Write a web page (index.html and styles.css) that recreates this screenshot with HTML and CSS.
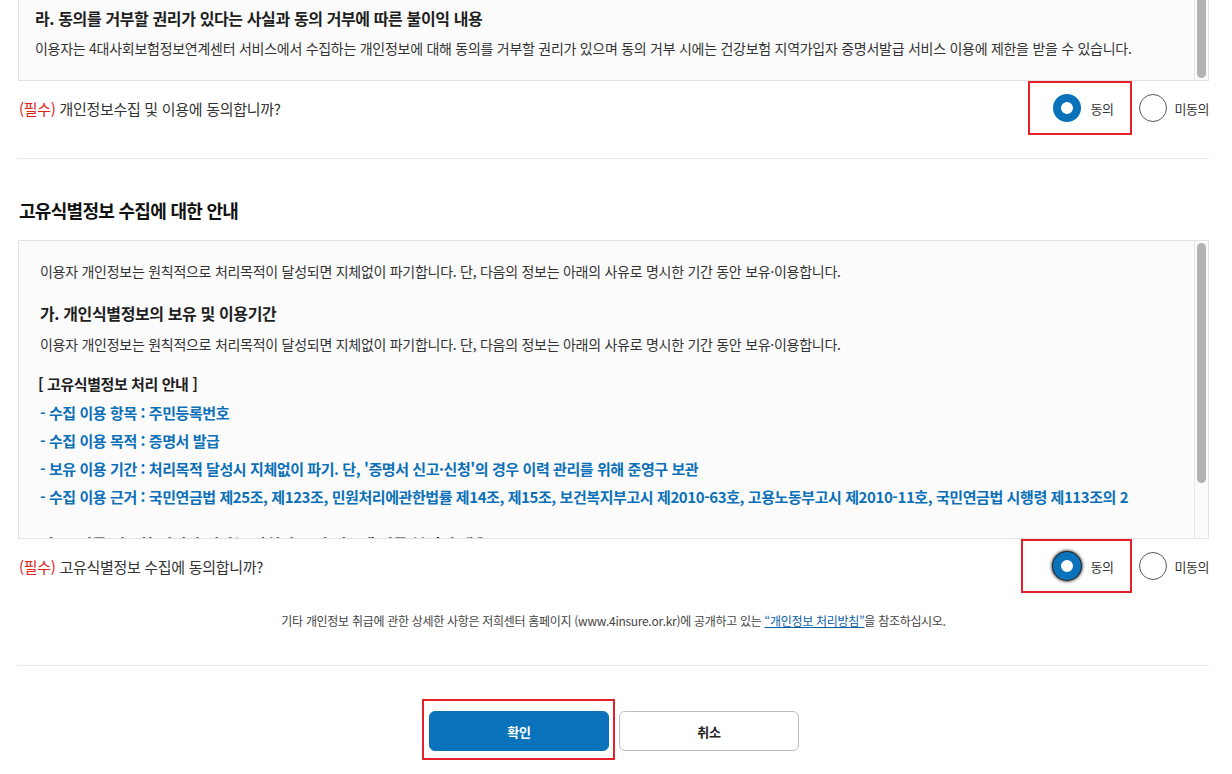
FILE: index.html
```html
<!DOCTYPE html>
<html lang="ko">
<head>
<meta charset="utf-8">
<title>개인정보 수집 동의</title>
<link rel="stylesheet" href="styles.css">
</head>
<body>
<div class="page">
  <div class="scroll-box box-top">
    <div class="scroll-content top-content">
      <h4 class="box-title">라. 동의를 거부할 권리가 있다는 사실과 동의 거부에 따른 불이익 내용</h4>
      <p class="box-text gap-s">이용자는 4대사회보험정보연계센터 서비스에서 수집하는 개인정보에 대해 동의를 거부할 권리가 있으며 동의 거부 시에는 건강보험 지역가입자 증명서발급 서비스 이용에 제한을 받을 수 있습니다.</p>
    </div>
    <div class="scrollbar"><div class="thumb thumb-top"></div></div>
  </div>

  <div class="agree-row row-one">
    <div class="question"><span class="req">(필수)</span> 개인정보수집 및 이용에 동의합니까?</div>
    <div class="choices">
      <label class="choice marked mark-one"><span class="radio checked"></span><span class="choice-text">동의</span></label>
      <label class="choice plain"><span class="radio"></span><span class="choice-text">미동의</span></label>
    </div>
  </div>

  <div class="divider div-one"></div>

  <h3 class="section-title">고유식별정보 수집에 대한 안내</h3>

  <div class="scroll-box box-main">
    <div class="scroll-content main-content">
      <p class="box-text">이용자 개인정보는 원칙적으로 처리목적이 달성되면 지체없이 파기합니다. 단, 다음의 정보는 아래의 사유로 명시한 기간 동안 보유·이용합니다.</p>
      <h4 class="box-title gap-l">가. 개인식별정보의 보유 및 이용기간</h4>
      <p class="box-text gap-m">이용자 개인정보는 원칙적으로 처리목적이 달성되면 지체없이 파기합니다. 단, 다음의 정보는 아래의 사유로 명시한 기간 동안 보유·이용합니다.</p>
      <p class="list-title">[ 고유식별정보 처리 안내 ]</p>
      <ul class="info-list">
        <li>- 수집 이용 항목 : 주민등록번호</li>
        <li>- 수집 이용 목적 : 증명서 발급</li>
        <li>- 보유 이용 기간 : 처리목적 달성시 지체없이 파기. 단, '증명서 신고·신청'의 경우 이력 관리를 위해 준영구 보관</li>
        <li>- 수집 이용 근거 : 국민연금법 제25조, 제123조, 민원처리에관한법률 제14조, 제15조, 보건복지부고시 제2010-63호, 고용노동부고시 제2010-11호, 국민연금법 시행령 제113조의 2</li>
      </ul>
      <h4 class="box-title gap-xl">나. 동의를 거부할 권리가 있다는 사실과 동의 거부에 따른 불이익 내용</h4>
      <p class="box-text gap-s">이용자는 4대사회보험정보연계센터 서비스에서 수집하는 고유식별정보에 대해 동의를 거부할 권리가 있습니다.</p>
    </div>
    <div class="scrollbar"><div class="thumb thumb-main"></div></div>
  </div>

  <div class="agree-row row-two">
    <div class="question"><span class="req">(필수)</span> 고유식별정보 수집에 동의합니까?</div>
    <div class="choices">
      <label class="choice marked mark-two"><span class="radio checked focused"></span><span class="choice-text">동의</span></label>
      <label class="choice plain"><span class="radio"></span><span class="choice-text">미동의</span></label>
    </div>
  </div>

  <p class="notice">기타 개인정보 취급에 관한 상세한 사항은 저희센터 홈페이지 (www.4insure.or.kr)에 공개하고 있는 <a class="notice-link" href="#">“개인정보 처리방침”</a>을 참조하십시오.</p>

  <div class="divider div-two"></div>

  <div class="btn-row">
    <div class="btn-mark"><button class="btn btn-primary" type="button">확인</button></div>
    <button class="btn btn-secondary" type="button">취소</button>
  </div>
</div>
</body>
</html>
```

FILE: styles.css
```css
* { box-sizing: border-box; }

html, body {
  margin: 0;
  padding: 0;
  background: #ffffff;
}

body {
  font-family: "Noto Sans CJK KR", "Noto Sans", sans-serif;
  color: #333333;
  overflow: hidden;
}

.page {
  width: 1191px;
  margin-left: 18px;
}

h3, h4, p, ul { margin: 0; padding: 0; }
ul { list-style: none; }

/* scroll boxes */
.scroll-box {
  display: flex;
  background: #fbfbfb;
  border: 1px solid #e2e2e2;
}

.box-top {
  border-top: none;
  height: 81px;
}

.box-main {
  height: 299px;
}

.scroll-content {
  flex: 1;
  overflow: hidden;
  padding-left: 16px;
}

.top-content { padding-top: 6px; }
.main-content { padding-top: 20px; padding-left: 21px; }

.scrollbar {
  width: 14px;
  border-left: 1px solid #e6e6e6;
  padding: 0 2px 0 2px;
  display: flex;
  flex-direction: column;
}

.thumb {
  width: 9px;
  background: #b2b2b2;
  border-radius: 5px;
}

.thumb-top {
  height: 78px;
  border-top-left-radius: 0;
  border-top-right-radius: 0;
}

.thumb-main {
  margin-top: 2px;
  height: 240px;
}

.box-title {
  font-size: 16px;
  line-height: 24px;
  font-weight: 700;
  color: #1e1e1e;
  letter-spacing: -0.38px;
  white-space: nowrap;
}

.box-text {
  font-size: 14px;
  line-height: 20px;
  color: #333333;
  letter-spacing: -0.27px;
  white-space: nowrap;
}

.gap-s { margin-top: 8px; }
.gap-m { margin-top: 9px; }
.gap-l { margin-top: 20px; }
.gap-xl { margin-top: 21px; }

.list-title {
  margin-top: 18px;
  margin-left: -2px;
  font-size: 15px;
  line-height: 24px;
  font-weight: 700;
  color: #1e1e1e;
  letter-spacing: -0.42px;
  white-space: nowrap;
}

.info-list {
  margin-top: 3px;
}

.info-list li {
  font-size: 15px;
  line-height: 28px;
  font-weight: 700;
  color: #0b70b8;
  letter-spacing: -0.42px;
  white-space: nowrap;
}

/* agree rows */
.agree-row {
  display: flex;
  align-items: center;
  justify-content: space-between;
  padding-left: 1px;
}

.row-one { height: 54px; }
.row-two { height: 54px; }

.question {
  font-size: 15px;
  letter-spacing: -0.3px;
  color: #333333;
}

.req { color: #e1231b; }

.choices {
  display: flex;
  align-items: center;
  height: 100%;
}

.choice {
  display: flex;
  align-items: center;
  gap: 10px;
}

.marked {
  height: 100%;
  border: 2px solid #e5202a;
}

.mark-one { width: 104px; padding-left: 23px; }
.mark-two { width: 111px; padding-left: 30px; }

.plain {
  margin-left: 7px;
  gap: 8px;
}

.radio {
  width: 28px;
  height: 28px;
  border-radius: 50%;
  border: 1px solid #5a5a5a;
  background: #ffffff;
  flex: none;
}

.radio.checked {
  border: 8px solid #0a72ba;
}

.radio.focused {
  box-shadow: 0 0 1px 1px #1a1a1a, 0 0 3px 2px rgba(0, 0, 0, 0.55);
}

.choice-text {
  font-size: 13px;
  letter-spacing: -0.5px;
  color: #333333;
}

/* dividers */
.divider {
  height: 1px;
  background: #e8e8e8;
}

.div-one { margin-top: 23px; }
.div-two { margin-top: 35px; }

.section-title {
  margin-top: 38px;
  margin-bottom: 17px;
  padding-left: 1px;
  font-size: 18px;
  line-height: 26px;
  font-weight: 700;
  color: #111111;
  letter-spacing: -0.7px;
}

.notice {
  margin-top: 19px;
  text-align: center;
  font-size: 12px;
  line-height: 18px;
  color: #444444;
  letter-spacing: -0.3px;
}

.notice-link {
  color: #0b5fa8;
  text-decoration: underline;
}

/* buttons */
.btn-row {
  margin-top: 33px;
  display: flex;
  align-items: flex-start;
  padding-left: 404px;
}

.btn-mark {
  border: 2px solid #e5202a;
  padding: 10px 4px 7px 5px;
}

.btn {
  width: 180px;
  height: 40px;
  border-radius: 6px;
  font-family: "Noto Sans CJK KR", "Noto Sans", sans-serif;
  font-size: 13px;
  font-weight: 700;
  letter-spacing: -0.3px;
  cursor: pointer;
}

.btn-primary {
  display: block;
  background: #0a72ba;
  border: 1px solid #0a72ba;
  color: #ffffff;
}

.btn-secondary {
  margin-left: 4px;
  margin-top: 12px;
  background: #ffffff;
  border: 1px solid #bdbdbd;
  color: #222222;
}
```
